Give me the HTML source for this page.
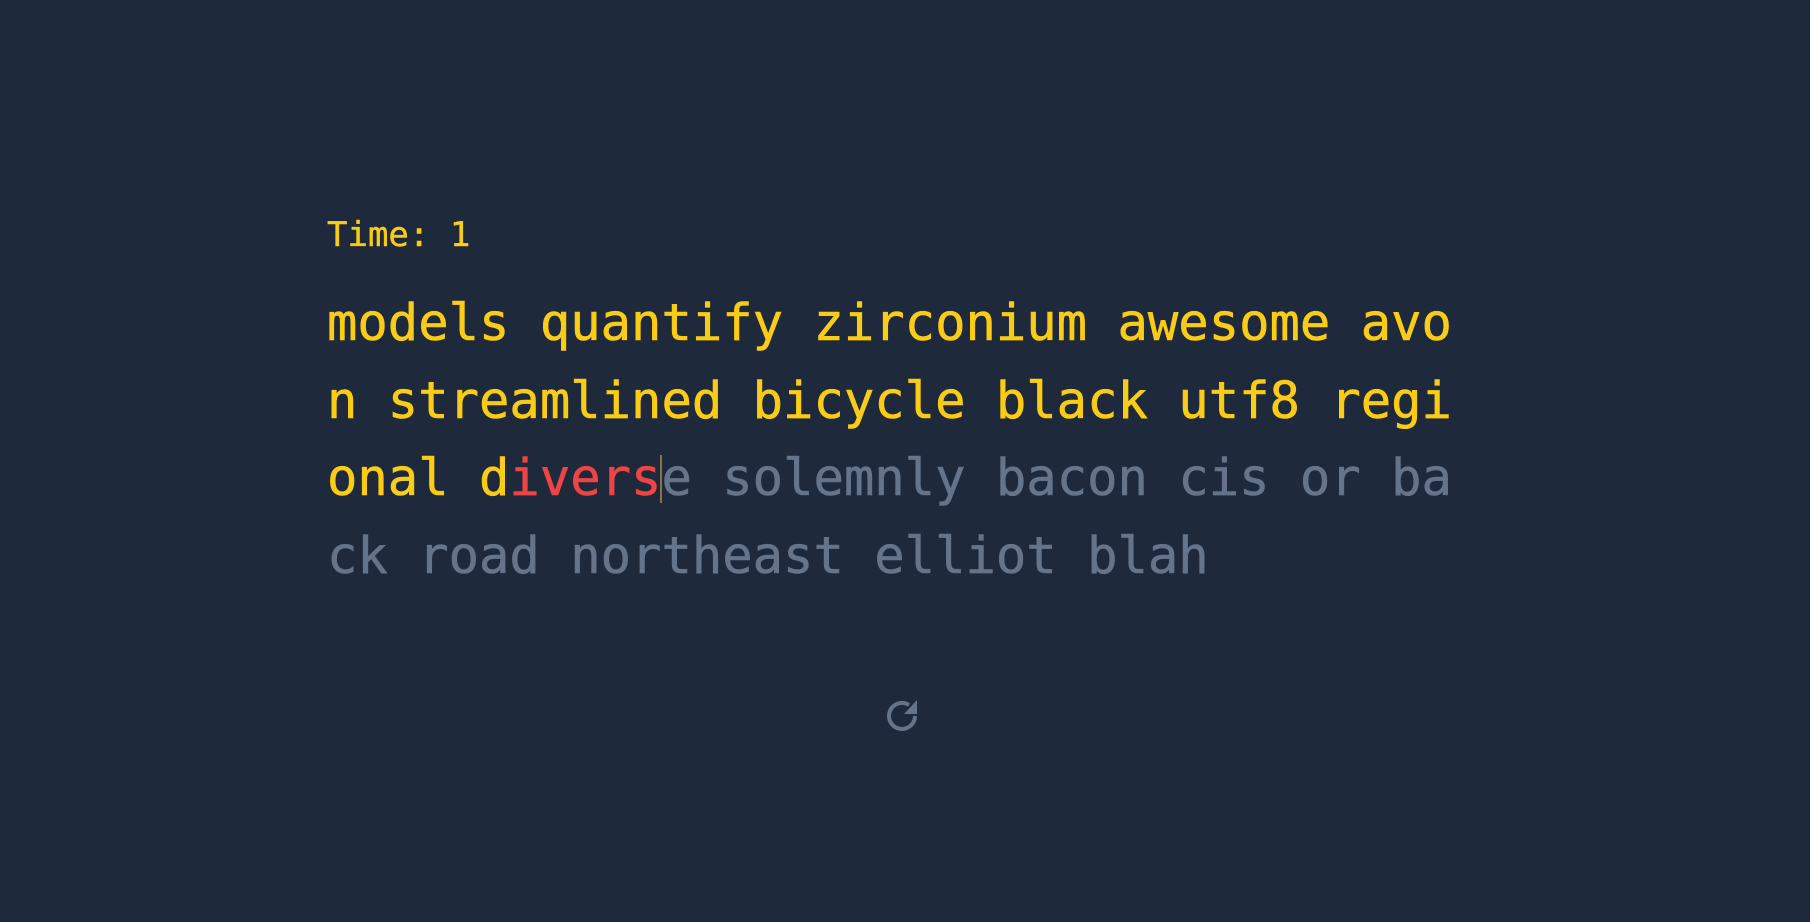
<!DOCTYPE html>
<html><head><meta charset="utf-8"><style>
html,body{margin:0;padding:0;width:1810px;height:922px;background:#1e293b;overflow:hidden}
.t{position:absolute;left:327px;top:215px;font:34px/40px "DejaVu Sans Mono",monospace;color:#facc15;white-space:pre;-webkit-text-stroke:0.4px #facc15}
.m{position:absolute;left:327px;top:284px;width:1130px;font:50.5px/77.5px "DejaVu Sans Mono",monospace;word-break:break-all;color:#64748b;-webkit-text-stroke:0.6px currentColor}
.y{color:#facc15}.r{color:#ef4444}
.c{position:relative}
.c:before{content:"";position:absolute;left:-1px;top:7px;width:2px;height:48px;background:#8a7440}
</style></head><body>
<div class="t">Time: 1</div>
<div class="m"><span class="y">models quantify zirconium awesome avon streamlined bicycle black utf8 regional d</span><span class="r">ivers</span><span class="c">e</span> solemnly bacon cis or back road northeast elliot blah</div>
<svg style="position:absolute;left:880px;top:692px" width="44" height="44" viewBox="0 0 44 44">
<path d="M35 24 A13 13 0 1 1 29 13" fill="none" stroke="#64748b" stroke-width="4"/>
<polygon points="37,8 37,22 24,22" fill="#64748b"/>
</svg>
</body></html>
